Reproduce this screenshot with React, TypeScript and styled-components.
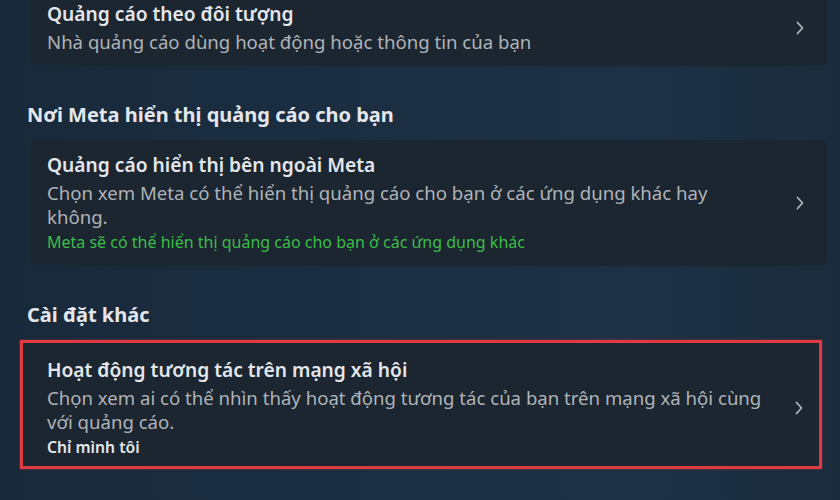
import React from "react";
import styled, { createGlobalStyle } from "styled-components";

const Global = createGlobalStyle`
  html, body { margin: 0; padding: 0; }
  body {
    width: 840px;
    height: 500px;
    overflow: hidden;
    background: linear-gradient(90deg, #18293a 0%, #1b2e42 45%, #1d3146 75%, #1a2b3b 100%);
    font-family: "Noto Sans", "Liberation Sans", sans-serif;
    -webkit-font-smoothing: antialiased;
  }
`;

const Page = styled.div`
  display: flex;
  flex-direction: column;
  padding: 0 13px 0 30px;
  margin-top: -11px;
`;

const SectionTitle = styled.h2`
  margin: 37px 0 13px -3px;
  font-size: 20px;
  line-height: 24px;
  font-weight: 700;
  color: #e4e6eb;
`;

const Card = styled.div<{ $highlight?: boolean }>`
  display: flex;
  align-items: center;
  gap: 25px;
  background: #1b2631;
  border-radius: ${(p) => (p.$highlight ? "0" : "8px")};
  padding: ${(p) => (p.$highlight ? "14px 15px 7px 24px" : "12px 22px 12px 17px")};
  margin: ${(p) => (p.$highlight ? "0 5px 0 -10px" : "0")};
  border: ${(p) => (p.$highlight ? "3px solid #de3a41" : "none")};
  box-shadow: ${(p) => (p.$highlight ? "0 0 2px rgba(222,58,65,0.6)" : "none")};
`;

const Body = styled.div`
  flex: 1;
  display: flex;
  flex-direction: column;
`;

const Title = styled.div`
  font-size: 19.2px;
  line-height: 26px;
  font-weight: 600;
  color: #e4e6eb;
`;

const Desc = styled.div`
  font-size: 18.6px;
  line-height: 24px;
  color: #b0b3b8;
  margin-top: 3px;
`;

const Note = styled.div<{ $tone: "green" | "white" }>`
  font-size: ${(p) => (p.$tone === "white" ? "15.7px" : "16px")};
  line-height: 24px;
  margin-top: 1px;
  font-weight: ${(p) => (p.$tone === "white" ? 600 : 400)};
  color: ${(p) => (p.$tone === "green" ? "#3dbd48" : "#e4e6eb")};
`;

const Chevron = () => (
  <svg width="10" height="16" viewBox="0 0 10 16" fill="none">
    <path d="M2.5 2.5 L7.5 8 L2.5 13.5" stroke="#b0b3b8" strokeWidth="1.8" strokeLinecap="round" strokeLinejoin="round" />
  </svg>
);

export default function App() {
  return (
    <>
      <Global />
      <Page>
        <Card>
          <Body>
            <Title>Quảng cáo theo đôi tượng</Title>
            <Desc>Nhà quảng cáo dùng hoạt động hoặc thông tin của bạn</Desc>
          </Body>
          <Chevron />
        </Card>

        <SectionTitle>Nơi Meta hiển thị quảng cáo cho bạn</SectionTitle>
        <Card>
          <Body>
            <Title>Quảng cáo hiển thị bên ngoài Meta</Title>
            <Desc>Chọn xem Meta có thể hiển thị quảng cáo cho bạn ở các ứng dụng khác hay không.</Desc>
            <Note $tone="green">Meta sẽ có thể hiển thị quảng cáo cho bạn ở các ứng dụng khác</Note>
          </Body>
          <Chevron />
        </Card>

        <SectionTitle>Cài đặt khác</SectionTitle>
        <Card $highlight>
          <Body>
            <Title>Hoạt động tương tác trên mạng xã hội</Title>
            <Desc>Chọn xem ai có thể nhìn thấy hoạt động tương tác của bạn trên mạng xã hội cùng với quảng cáo.</Desc>
            <Note $tone="white">Chỉ mình tôi</Note>
          </Body>
          <Chevron />
        </Card>
      </Page>
    </>
  );
}
